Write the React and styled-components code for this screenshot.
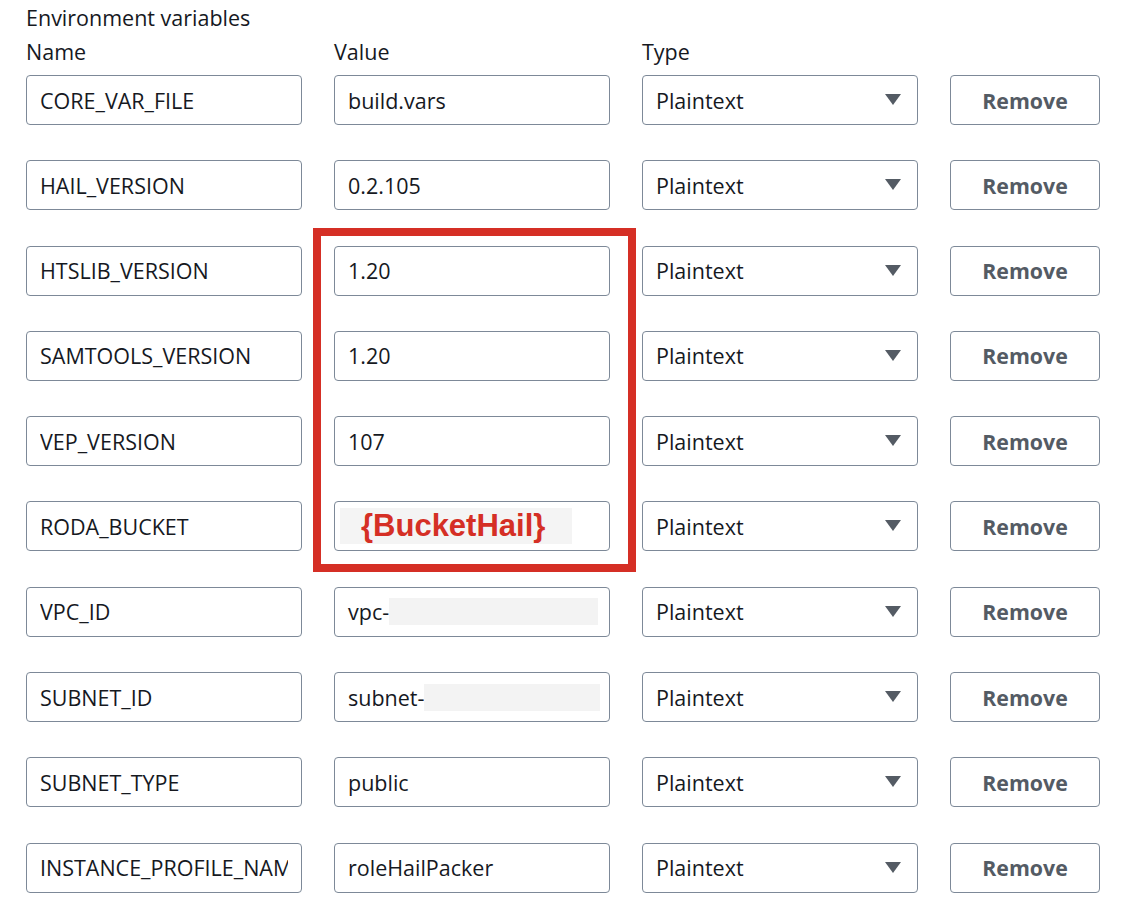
import React from 'react';
import styled, { createGlobalStyle } from 'styled-components';

const Global = createGlobalStyle`
  html, body {
    margin: 0;
    padding: 0;
    background: #ffffff;
  }
  body {
    font-family: "Open Sans", "Noto Sans", sans-serif;
    color: #16191f;
  }
`;

const Page = styled.div`
  position: relative;
  width: 1122px;
  height: 906px;
  overflow: hidden;
  padding: 5px 0 0 26px;
  box-sizing: border-box;
`;

const Title = styled.div`
  font-size: 21.5px;
  line-height: 26px;
  height: 34px;
`;

const Grid = styled.div`
  display: grid;
  grid-template-columns: 276px 276px 276px 150px;
  column-gap: 32px;
  row-gap: 35.3px;
  grid-auto-rows: 50px;
`;

const Header = styled.div`
  display: grid;
  grid-template-columns: 276px 276px 276px 150px;
  column-gap: 32px;
  font-size: 21.5px;
  line-height: 26px;
  height: 36px;
`;

const Field = styled.div`
  position: relative;
  box-sizing: border-box;
  height: 50px;
  border: 1px solid #7d8998;
  border-radius: 4px;
  padding: 0 13px;
  display: flex;
  align-items: center;
  font-size: 21.5px;
  white-space: nowrap;
  background: #fff;
`;

const Clip = styled.span`
  display: flex;
  align-items: center;
  overflow: hidden;
  min-width: 0;
  flex: 1;
`;

const Redacted = styled.span`
  display: inline-block;
  background: #f3f3f3;
  width: ${p => p.w}px;
  height: ${p => p.h}px;
  flex-shrink: 0;
`;

const Placeholder = styled.span`
  display: inline-flex;
  align-items: center;
  background: #f4f4f4;
  margin-left: -8px;
  width: 232px;
  height: 36px;
  padding-left: 21px;
  box-sizing: border-box;
  font-family: "Liberation Sans", Arial, sans-serif;
  font-weight: bold;
  font-size: 31px;
  color: #d52f25;
`;

const Select = styled(Field)`
  justify-content: space-between;
  padding-right: 16px;
`;

const Caret = styled.svg`
  width: 16px;
  height: 12px;
  fill: #545b64;
`;

const RemoveButton = styled.button`
  box-sizing: border-box;
  height: 50px;
  border: 1px solid #7d8998;
  border-radius: 4px;
  background: #fff;
  font-family: "Open Sans", "Noto Sans", sans-serif;
  font-weight: 700;
  font-size: 21.3px;
  color: #545b64;
  padding: 0;
`;

const Highlight = styled.div`
  position: absolute;
  left: 313px;
  top: 228px;
  width: 323px;
  height: 344px;
  box-sizing: border-box;
  border: 8px solid #d52f25;
  pointer-events: none;
`;

const rows = [
  { name: 'CORE_VAR_FILE', value: 'build.vars' },
  { name: 'HAIL_VERSION', value: '0.2.105' },
  { name: 'HTSLIB_VERSION', value: '1.20' },
  { name: 'SAMTOOLS_VERSION', value: '1.20' },
  { name: 'VEP_VERSION', value: '107' },
  { name: 'RODA_BUCKET', placeholder: '{BucketHail}' },
  { name: 'VPC_ID', value: 'vpc-', redact: 209 },
  { name: 'SUBNET_ID', value: 'subnet-', redact: 176 },
  { name: 'SUBNET_TYPE', value: 'public' },
  { name: 'INSTANCE_PROFILE_NAME', value: 'roleHailPacker' },
];

export default function App() {
  return (
    <Page>
      <Global />
      <Title>Environment variables</Title>
      <Header>
        <div>Name</div>
        <div>Value</div>
        <div>Type</div>
        <div />
      </Header>
      <Grid>
        {rows.map(r => (
          <React.Fragment key={r.name}>
            <Field>
              <Clip>{r.name}</Clip>
            </Field>
            <Field>
              {r.placeholder ? (
                <Placeholder>{r.placeholder}</Placeholder>
              ) : (
                <>
                  {r.value}
                  {r.redact && <Redacted w={r.redact} h={27} />}
                </>
              )}
            </Field>
            <Select>
              Plaintext
              <Caret viewBox="0 0 16 12">
                <path d="M0 0 H16 L8 11 Z" />
              </Caret>
            </Select>
            <RemoveButton>Remove</RemoveButton>
          </React.Fragment>
        ))}
      </Grid>
      <Highlight />
    </Page>
  );
}
